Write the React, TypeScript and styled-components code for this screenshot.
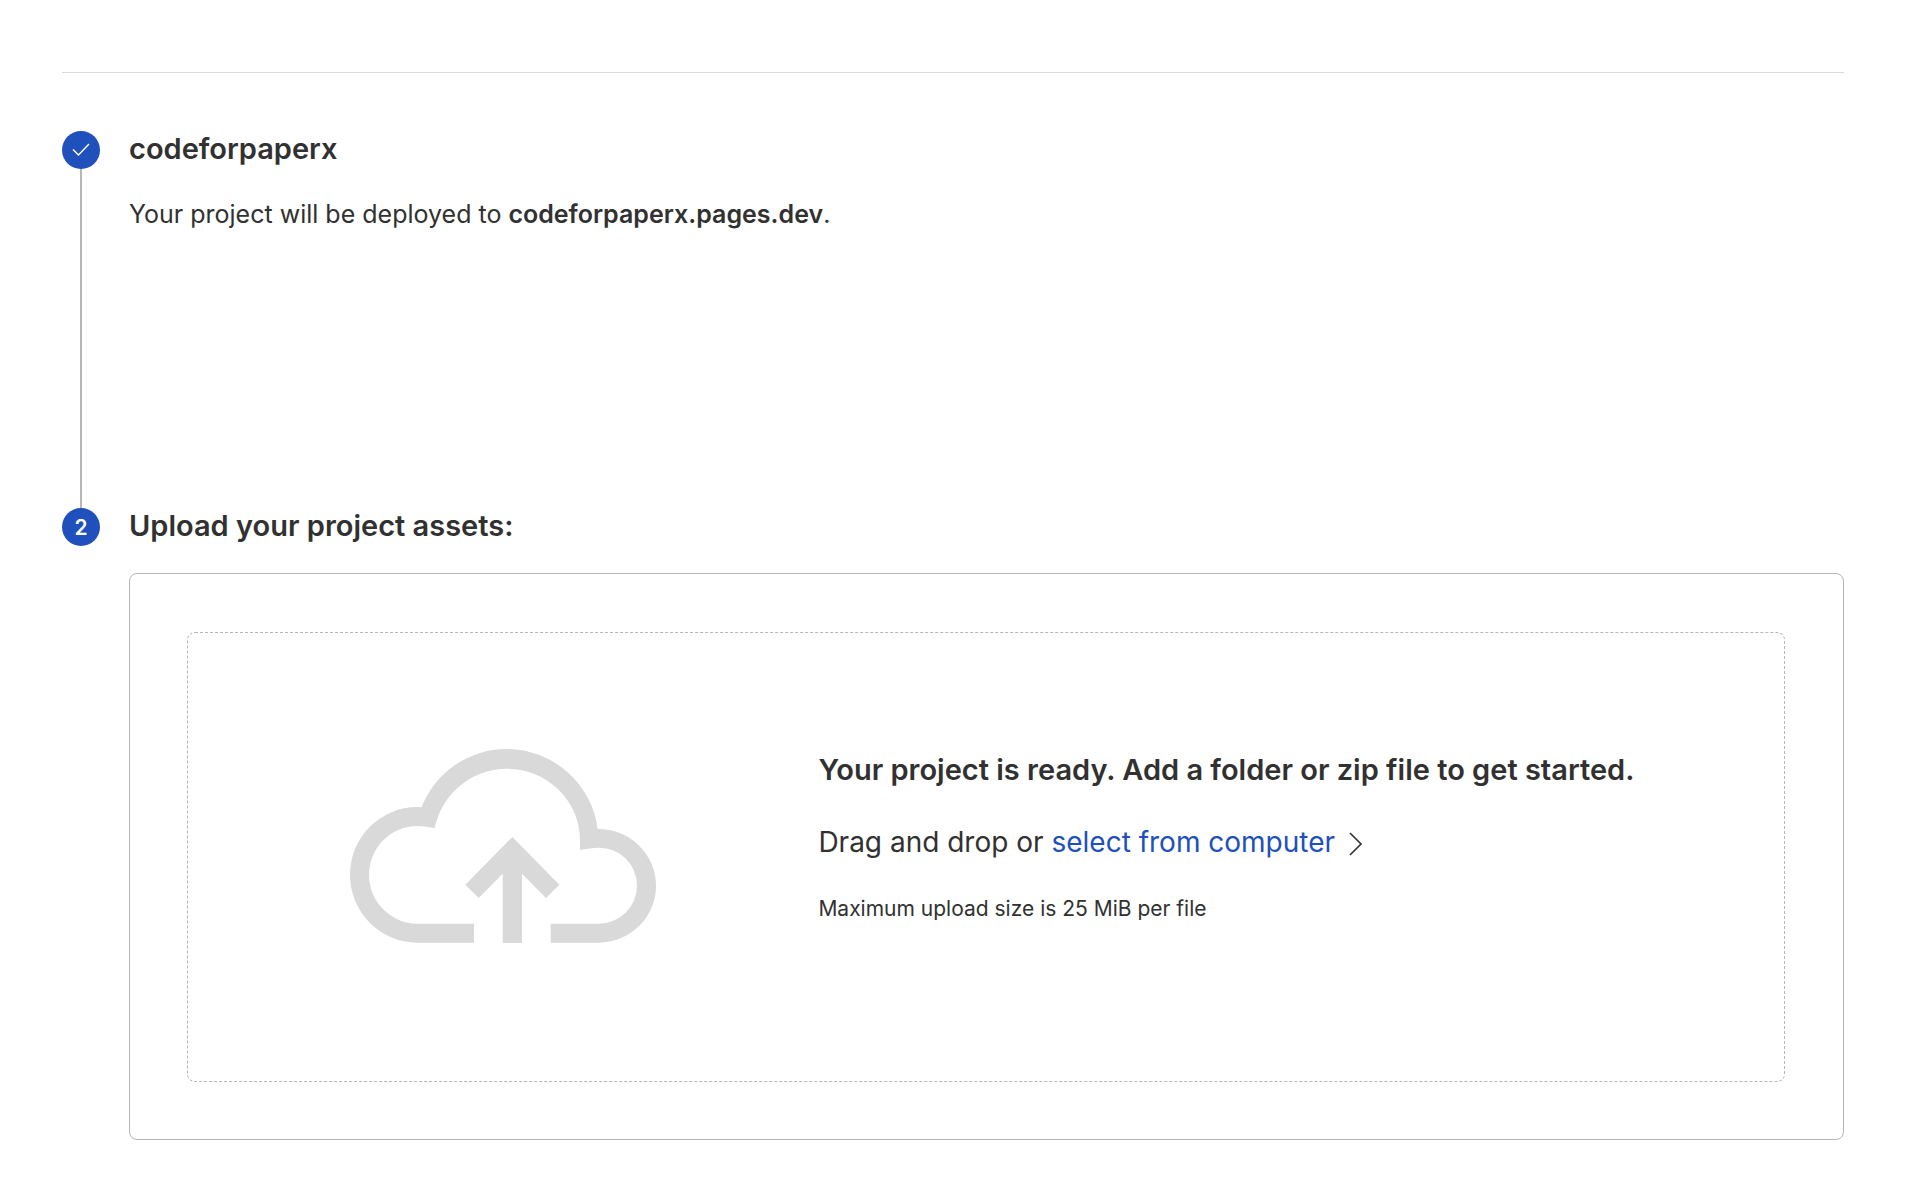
import React from "react";
import styled, { createGlobalStyle } from "styled-components";

const color = {
  text: "#313131",
  blue: "#2050bb",
  line: "#b6b6b6",
  soft: "#d9d9d9",
};

const GlobalStyle = createGlobalStyle`
  *, *::before, *::after { box-sizing: border-box; }
  body {
    margin: 0;
    background: #fff;
    color: ${color.text};
    font-family: Inter, "Liberation Sans", sans-serif;
  }
  h2, h3, p, ol { margin: 0; padding: 0; }
`;

const Page = styled.main`
  padding: 72px 72px 42px 62px;
`;

const Divider = styled.hr`
  height: 1px;
  margin: 0 0 58px;
  border: 0;
  background: ${color.soft};
`;

const Steps = styled.ol`
  list-style: none;
`;

const Step = styled.li`
  display: flex;
  gap: 29px;
`;

const Rail = styled.div`
  flex: none;
  display: flex;
  flex-direction: column;
  align-items: center;
`;

const Marker = styled.span`
  flex: none;
  display: flex;
  align-items: center;
  justify-content: center;
  width: 38px;
  height: 38px;
  border-radius: 50%;
  background: ${color.blue};
  color: #fff;
  font-size: 21px;
  font-weight: 600;
`;

const Connector = styled.span`
  flex: 1;
  width: 2px;
  background: ${color.line};
`;

const StepBody = styled.div<{ $spaced?: boolean }>`
  flex: 1;
  min-width: 0;
  padding-bottom: ${(p) => (p.$spaced ? "275px" : "0")};
`;

const StepTitle = styled.h2`
  font-size: 29px;
  line-height: 36px;
  font-weight: 600;
`;

const Summary = styled.p`
  margin-top: 28px;
  font-size: 25px;
  line-height: 38px;

  strong { font-weight: 600; }
`;

const Card = styled.section`
  margin-top: 29px;
  padding: 58px 58px 57px 57px;
  border: 1px solid ${color.line};
  border-radius: 8px;
`;

const DropZone = styled.div`
  display: grid;
  grid-template-columns: 2fr 3fr;
  align-items: start;
  padding: 116px 20px 138px 0;
  border: 1px dashed ${color.line};
  border-radius: 8px;
`;

const CloudIcon = styled.svg`
  justify-self: center;
  display: block;
  width: 306px;
  height: 194px;
  fill: ${color.soft};
`;

const Instructions = styled.div`
  display: flex;
  flex-direction: column;
  gap: 30px;
`;

const ReadyTitle = styled.h3`
  font-size: 29px;
  line-height: 42px;
  font-weight: 600;
`;

const DropLine = styled.p`
  font-size: 28px;
  line-height: 42px;
`;

const SelectLink = styled.a`
  color: ${color.blue};
  text-decoration: none;
`;

const Chevron = styled.svg`
  width: 14px;
  height: 24px;
  margin-left: 14px;
  vertical-align: -4px;
  fill: none;
  stroke: ${color.text};
`;

const Limit = styled.p`
  font-size: 21px;
  line-height: 32px;
`;

export default function App() {
  return (
    <>
      <GlobalStyle />
      <Page>
        <Divider />
        <Steps>
          <Step>
            <Rail>
              <Marker>
                <svg width="18" height="14" viewBox="0 0 18 14" fill="none" stroke="#fff" strokeWidth="1.5" aria-hidden="true">
                  <path d="M1 6.5 6.5 12 17 1" />
                </svg>
              </Marker>
              <Connector />
            </Rail>
            <StepBody $spaced>
              <StepTitle>codeforpaperx</StepTitle>
              <Summary>
                Your project will be deployed to <strong>codeforpaperx.pages.dev</strong>.
              </Summary>
            </StepBody>
          </Step>
          <Step>
            <Rail>
              <Marker>2</Marker>
            </Rail>
            <StepBody>
              <StepTitle>Upload your project assets:</StepTitle>
              <Card>
                <DropZone>
                  <CloudIcon viewBox="60 57 918 582" aria-hidden="true">
                    <path d="M432 638H262A202 203.500 0 0 1 262 231H275A274 274 0 0 1 529 57A276 276 0 0 1 803 297A173 170.500 0 0 1 807 638H662V581H807A114 114 0 0 0 807 353Q790 353 750 360V331A220 215 0 0 0 529 116A222 222 0 0 0 314 294Q280 288 262 288A145 146.500 0 0 0 262 581H432Z" />
                    <path d="M547 321 688 464 648 504 576 431V639H518V431L446 504 406 464Z" />
                  </CloudIcon>
                  <Instructions>
                    <ReadyTitle>Your project is ready. Add a folder or zip file to get started.</ReadyTitle>
                    <DropLine>
                      Drag and drop or <SelectLink href="#select">select from computer</SelectLink>
                      <Chevron viewBox="0 0 14 24" strokeWidth="1.6" aria-hidden="true">
                        <path d="M1 1 12 12 1 23" />
                      </Chevron>
                    </DropLine>
                    <Limit>Maximum upload size is 25 MiB per file</Limit>
                  </Instructions>
                </DropZone>
              </Card>
            </StepBody>
          </Step>
        </Steps>
      </Page>
    </>
  );
}
